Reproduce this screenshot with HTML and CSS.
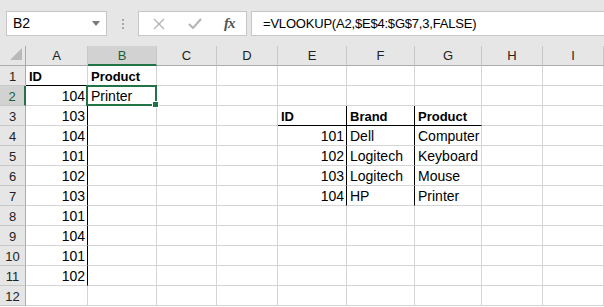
FILE: index.html
```html
<!DOCTYPE html>
<html lang="en">
<head>
    <meta charset="UTF-8">
    <title>VLOOKUP</title>
    <link rel="stylesheet" href="styles.css">
</head>
<body>
    <div class="toolbar">
        <div class="namebox">
            <span>B2</span>
            <svg class="caret" width="8" height="5" viewBox="0 0 8 5"><path d="M0 0H8L4 5Z" fill="#7a7a7a"/></svg>
        </div>
        <div class="grip"><i></i><i></i><i></i></div>
        <div class="fnbox">
            <svg width="12" height="12" viewBox="0 0 12 12"><path d="M1 1L11 11M11 1L1 11" stroke="#b4b4b4" stroke-width="1.4" fill="none"/></svg>
            <svg width="14" height="11" viewBox="0 0 14 11"><path d="M1 6L5 10L13 1" stroke="#b4b4b4" stroke-width="2" fill="none"/></svg>
            <span class="fx">fx</span>
        </div>
        <div class="formula">=VLOOKUP(A2,$E$4:$G$7,3,FALSE)</div>
    </div>

    <div class="sheet">
        <div class="row head">
            <div class="corner"><svg width="12" height="12" viewBox="0 0 12 12"><path d="M12 0V12H0Z" fill="#b9b9b9"/></svg></div>
            <div>A</div><div class="sel-col">B</div><div>C</div><div>D</div><div>E</div><div>F</div><div>G</div><div>H</div><div>I</div>
        </div>
        <div class="row">
            <div class="num">1</div>
            <div class="b bb">ID</div><div class="b">Product</div><div></div><div></div><div></div><div></div><div></div><div></div><div></div>
        </div>
        <div class="row">
            <div class="num sel-row">2</div>
            <div class="n br">104</div><div class="active">Printer</div><div></div><div></div><div></div><div></div><div></div><div></div><div></div>
        </div>
        <div class="row">
            <div class="num">3</div>
            <div class="n br">103</div><div></div><div></div><div></div><div class="b bb br">ID</div><div class="b bb br">Brand</div><div class="b bb">Product</div><div></div><div></div>
        </div>
        <div class="row">
            <div class="num">4</div>
            <div class="n br">104</div><div></div><div></div><div></div><div class="n br">101</div><div class="br">Dell</div><div>Computer</div><div></div><div></div>
        </div>
        <div class="row">
            <div class="num">5</div>
            <div class="n br">101</div><div></div><div></div><div></div><div class="n br">102</div><div class="br">Logitech</div><div>Keyboard</div><div></div><div></div>
        </div>
        <div class="row">
            <div class="num">6</div>
            <div class="n br">102</div><div></div><div></div><div></div><div class="n br">103</div><div class="br">Logitech</div><div>Mouse</div><div></div><div></div>
        </div>
        <div class="row">
            <div class="num">7</div>
            <div class="n br">103</div><div></div><div></div><div></div><div class="n br">104</div><div class="br">HP</div><div>Printer</div><div></div><div></div>
        </div>
        <div class="row">
            <div class="num">8</div>
            <div class="n br">101</div><div></div><div></div><div></div><div></div><div></div><div></div><div></div><div></div>
        </div>
        <div class="row">
            <div class="num">9</div>
            <div class="n br">104</div><div></div><div></div><div></div><div></div><div></div><div></div><div></div><div></div>
        </div>
        <div class="row">
            <div class="num">10</div>
            <div class="n br">101</div><div></div><div></div><div></div><div></div><div></div><div></div><div></div><div></div>
        </div>
        <div class="row">
            <div class="num">11</div>
            <div class="n br">102</div><div></div><div></div><div></div><div></div><div></div><div></div><div></div><div></div>
        </div>
        <div class="row">
            <div class="num">12</div>
            <div></div><div></div><div></div><div></div><div></div><div></div><div></div><div></div><div></div>
        </div>
    </div>
</body>
</html>
```

FILE: styles.css
```css
*{
    padding: 0;
    margin: 0;
    box-sizing: border-box;
}
body{
    width: 604px;
    height: 307px;
    overflow: hidden;
    background: #fff;
    font-family: "Liberation Sans", Arial, sans-serif;
    font-size: 14px;
    color: #000;
}

/* formula bar */
.toolbar{
    height: 46px;
    background: #e6e6e6;
    display: flex;
    align-items: flex-start;
    padding: 11px 0 0 6px;
    white-space: nowrap;
}
.namebox{
    width: 101px;
    height: 25px;
    background: #fff;
    border: 1px solid #c6c6c6;
    display: flex;
    align-items: center;
    justify-content: space-between;
    padding: 0 6px 0 6px;
    line-height: 23px;
}
.caret{
    margin-top: -1px;
}
.grip{
    width: 31px;
    height: 25px;
    display: flex;
    flex-direction: column;
    align-items: center;
    justify-content: center;
    gap: 2px;
}
.grip i{
    display: block;
    width: 2px;
    height: 2px;
    background: #a6a6a6;
}
.fnbox{
    width: 109px;
    height: 25px;
    background: #fff;
    border: 1px solid #c6c6c6;
    display: flex;
    align-items: center;
    padding-left: 14px;
    gap: 0;
}
.fnbox svg:first-child{
    margin-right: 23px;
}
.fnbox svg:nth-child(2){
    margin-right: 22px;
}
.fx{
    font-family: "Liberation Serif", "Times New Roman", serif;
    font-style: italic;
    font-weight: bold;
    font-size: 15px;
    color: #555;
    letter-spacing: -1px;
}
.formula{
    margin-left: 4px;
    flex: 1;
    height: 25px;
    background: #fff;
    border: 1px solid #c6c6c6;
    border-right: none;
    padding-left: 11px;
    line-height: 23px;
    font-size: 13px;
    letter-spacing: -0.2px;
}

/* grid */
.row{
    display: grid;
    grid-template-columns: 26px 62px 69px 60px 61px 69px 68px 67px 61px 61px;
    height: 20px;
}
.row > div{
    height: 20px;
    border-right: 1px solid #d4d4d4;
    border-bottom: 1px solid #d4d4d4;
    padding: 0 3px;
    line-height: 21px;
    white-space: nowrap;
}
.head > div{
    background: #e6e6e6;
    border-right: 1px solid #c8c8c8;
    border-bottom: 1px solid #ababab;
    text-align: center;
    font-size: 13px;
    color: #222;
    line-height: 20px;
}
.head > .corner{
    display: flex;
    align-items: flex-end;
    justify-content: flex-end;
    padding: 0 3px 5px 0;
    border-right-color: #ababab;
}
.head > .sel-col{
    background: #d2d2d2;
    border-bottom: 2px solid #217346;
    color: #1b5e38;
}
.row > .num{
    background: #e6e6e6;
    border-right: 1px solid #ababab;
    border-bottom: 1px solid #c8c8c8;
    text-align: center;
    font-size: 13px;
    color: #222;
    padding: 0;
}
.row > .sel-row{
    background: #d2d2d2;
    border-right: 2px solid #217346;
    color: #1b5e38;
}
.row > .b{
    font-weight: bold;
    font-size: 13px;
}
.row > .n{
    text-align: right;
    padding-right: 2px;
}
.row > .bb{
    border-bottom-color: #000;
}
.row > .br{
    border-right-color: #000;
}

/* active cell */
.active{
    position: relative;
}
.active::before{
    content: "";
    position: absolute;
    left: -2px;
    top: -1px;
    right: -1px;
    bottom: -1px;
    border: 2px solid #217346;
    z-index: 1;
}
.active::after{
    content: "";
    position: absolute;
    right: -3px;
    bottom: -3px;
    width: 5px;
    height: 5px;
    background: #217346;
    border: 1px solid #fff;
    z-index: 2;
}
```
